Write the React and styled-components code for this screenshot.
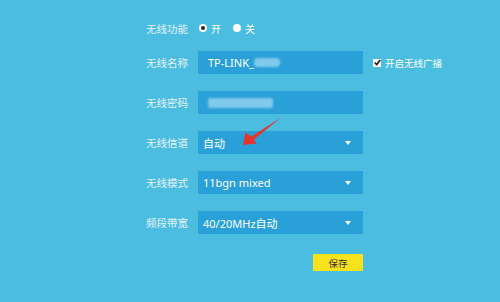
import styled, { createGlobalStyle } from "styled-components"

const GlobalStyle = createGlobalStyle`
	html, body {
		margin: 0;
		padding: 0;
		background: #4bbde1;
	}
	body {
		font-family: "Noto Sans", "Noto Sans CJK SC", sans-serif;
	}
`

const Page = styled.div`
	position: relative;
	width: 500px;
	height: 302px;
	overflow: hidden;
	background: #4bbde1;
`

const Form = styled.div`
	display: flex;
	flex-direction: column;
	gap: 17px;
	padding: 17px 0 0 146px;
`

const Row = styled.div`
	display: flex;
	align-items: center;
	height: ${(p) => p.$h || 23}px;
	margin-bottom: ${(p) => p.$after || 0}px;
`

const Label = styled.div`
	width: 52px;
	font-family: "Noto Sans CJK SC", sans-serif;
	font-size: 10.5px;
	color: #e6f4fa;
	white-space: nowrap;
`

const Radios = styled.div`
	display: flex;
	align-items: center;
	gap: 12px;
	margin-left: 1px;
`

const RadioItem = styled.div`
	display: flex;
	align-items: center;
	gap: 4px;
	font-family: "Noto Sans CJK SC", sans-serif;
	font-size: 10px;
	color: #ffffff;
`

const RadioDot = styled.span`
	position: relative;
	width: 8px;
	height: 8px;
	border-radius: 50%;
	background: #ffffff;
	&::after {
		content: "";
		display: ${(p) => (p.$on ? "block" : "none")};
		position: absolute;
		left: 2px;
		top: 2px;
		width: 4px;
		height: 4px;
		border-radius: 50%;
		background: #1d2a33;
	}
`

const Box = styled.div`
	position: relative;
	box-sizing: border-box;
	width: 165px;
	height: 23px;
	display: flex;
	align-items: center;
	padding-left: ${(p) => p.$pad || 5}px;
	background: #29a0d8;
	border-radius: 1px;
	font-size: 11px;
	color: #ffffff;
	font-family: "Noto Sans", "Noto Sans CJK SC", sans-serif;
`

const Blur = styled.span`
	display: inline-block;
	width: ${(p) => p.$w}px;
	height: ${(p) => p.$hh || 10}px;
	background: #80cbec;
	border-radius: ${(p) => p.$r || 2}px;
	filter: blur(1px);
`

const Caret = styled.span`
	position: absolute;
	right: 12px;
	top: 10px;
	width: 0;
	height: 0;
	border-left: 3.5px solid transparent;
	border-right: 3.5px solid transparent;
	border-top: 4px solid #ffffff;
`

const Broadcast = styled.div`
	display: flex;
	align-items: center;
	gap: 4px;
	margin-left: 10px;
	font-family: "Noto Sans CJK SC", sans-serif;
	font-size: 9.5px;
	color: #ffffff;
`

const Check = styled.span`
	display: flex;
	align-items: center;
	justify-content: center;
	width: 8px;
	height: 8px;
	background: #ffffff;
`

const ButtonCell = styled.div`
	width: 165px;
	display: flex;
	justify-content: flex-end;
	margin-left: 52px;
`

const SaveButton = styled.div`
	width: 50px;
	height: 17px;
	display: flex;
	align-items: center;
	justify-content: center;
	background: #f8e21c;
	border-radius: 1px;
	font-family: "Noto Sans CJK SC", sans-serif;
	font-size: 9.5px;
	color: #333333;
`

const Arrow = styled.svg`
	position: absolute;
	left: 0;
	top: 0;
	pointer-events: none;
`

function Select({ value }) {
	return (
		<Box>
			{value}
			<Caret />
		</Box>
	)
}

export default function App() {
	return (
		<Page>
			<GlobalStyle />
			<Form>
				<Row $h={22} $after={-5}>
					<Label>无线功能</Label>
					<Radios>
						<RadioItem><RadioDot $on />开</RadioItem>
						<RadioItem><RadioDot />关</RadioItem>
					</Radios>
				</Row>
				<Row>
					<Label>无线名称</Label>
					<Box $pad={10}>
						TP-LINK_<Blur $w={26} $hh={9} $r={4} />
					</Box>
					<Broadcast>
						<Check>
							<svg width="7" height="7" viewBox="0 0 7 7">
								<path d="M0.8 3.6 L2.7 5.6 L6.3 1" stroke="#1a1a1a" strokeWidth="1.6" fill="none" />
							</svg>
						</Check>
						开启无线广播
					</Broadcast>
				</Row>
				<Row>
					<Label>无线密码</Label>
					<Box $pad={10}>
						<Blur $w={65} />
					</Box>
				</Row>
				<Row>
					<Label>无线信道</Label>
					<Select value="自动" />
				</Row>
				<Row>
					<Label>无线模式</Label>
					<Select value="11bgn mixed" />
				</Row>
				<Row>
					<Label>频段带宽</Label>
					<Select value="40/20MHz自动" />
				</Row>
				<Row>
					<ButtonCell>
						<SaveButton>保存</SaveButton>
					</ButtonCell>
				</Row>
			</Form>
			<Arrow width="500" height="302" viewBox="0 0 500 302">
				<polygon
					points="243,145 245.5,132.5 251.4,136.4 281,117.5 253.9,139.6 256.5,143.5"
					fill="#e8352c"
				/>
			</Arrow>
		</Page>
	)
}
